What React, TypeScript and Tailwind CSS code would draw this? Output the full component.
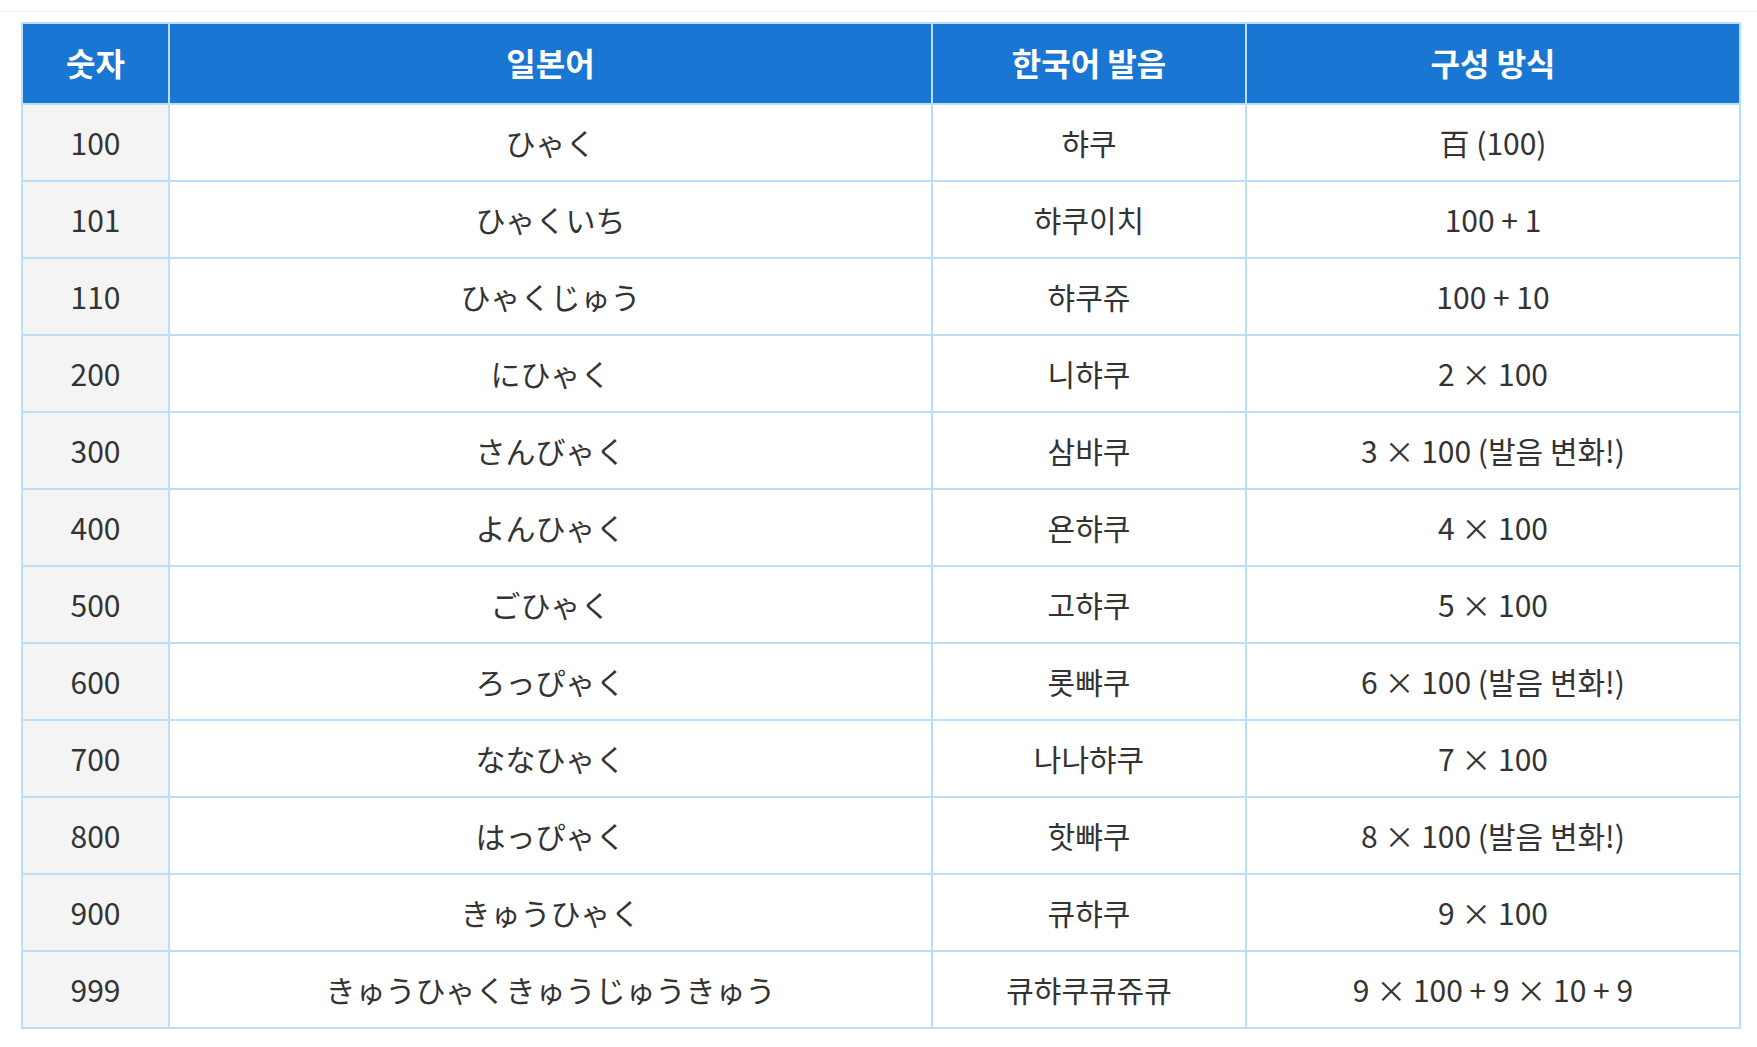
import React from "react";

const rows: [string, string, string, string][] = [
  ["100", "ひゃく", "햐쿠", "百 (100)"],
  ["101", "ひゃくいち", "햐쿠이치", "100 + 1"],
  ["110", "ひゃくじゅう", "햐쿠쥬", "100 + 10"],
  ["200", "にひゃく", "니햐쿠", "2 × 100"],
  ["300", "さんびゃく", "삼뱌쿠", "3 × 100 (발음 변화!)"],
  ["400", "よんひゃく", "욘햐쿠", "4 × 100"],
  ["500", "ごひゃく", "고햐쿠", "5 × 100"],
  ["600", "ろっぴゃく", "롯뺘쿠", "6 × 100 (발음 변화!)"],
  ["700", "ななひゃく", "나나햐쿠", "7 × 100"],
  ["800", "はっぴゃく", "핫뺘쿠", "8 × 100 (발음 변화!)"],
  ["900", "きゅうひゃく", "큐햐쿠", "9 × 100"],
  ["999", "きゅうひゃくきゅうじゅうきゅう", "큐햐쿠큐쥬큐", "9 × 100 + 9 × 10 + 9"],
];

export default function App() {
  return (
    <div
      className="w-[1757px] h-[1047px] bg-white overflow-hidden"
      style={{ fontFamily: '"Noto Sans CJK KR", "Noto Sans", sans-serif' }}
    >
      <div className="h-[11px]" />
      <div className="border-t border-[#eeeeee]" />
      <div className="pl-[21px] pt-[10px]">
        <table className="w-[1718px] border-collapse border-2 border-[#bbdefb] table-fixed">
          <colgroup>
            <col className="w-[147px]" />
            <col className="w-[763px]" />
            <col className="w-[314px]" />
            <col className="w-[494px]" />
          </colgroup>
          <thead>
            <tr className="bg-[#1976d2] text-white">
              {["숫자", "일본어", "한국어 발음", "구성 방식"].map((h) => (
                <th
                  key={h}
                  className="h-[81px] border-2 border-[#bbdefb] text-center text-[32px] font-bold leading-none px-0 pt-0 pb-[3px]"
                >
                  {h}
                </th>
              ))}
            </tr>
          </thead>
          <tbody>
            {rows.map((r) => (
              <tr key={r[0]} className="text-[#333333]">
                <td className="h-[77px] border-2 border-[#bbdefb] bg-[#f4f4f4] text-center text-[30px] leading-none px-0 pt-0 pb-[2px]">
                  {r[0]}
                </td>
                <td className="h-[77px] border-2 border-[#bbdefb] bg-white text-center text-[30px] leading-none px-0 pt-0 pb-[2px]">
                  {r[1]}
                </td>
                <td className="h-[77px] border-2 border-[#bbdefb] bg-white text-center text-[30px] leading-none px-0 pt-0 pb-[2px]">
                  {r[2]}
                </td>
                <td className="h-[77px] border-2 border-[#bbdefb] bg-white text-center text-[30px] leading-none px-0 pt-0 pb-[2px]">
                  {r[3]}
                </td>
              </tr>
            ))}
          </tbody>
        </table>
      </div>
    </div>
  );
}
